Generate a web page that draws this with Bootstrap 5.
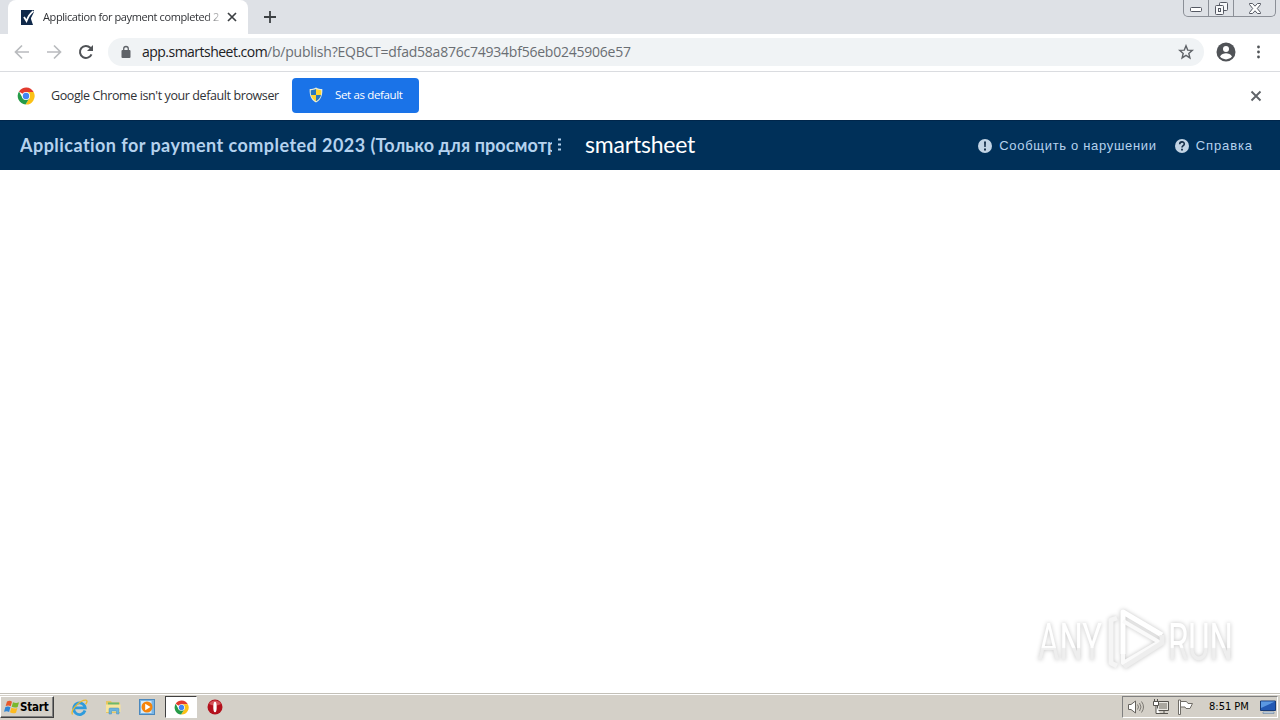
<!DOCTYPE html>
<html lang="ru">
  <head>
    <meta charset="UTF-8" />
    <meta name="viewport" content="width=device-width, initial-scale=1.0" />
    <title>Application for payment completed 2023</title>
    <link
      href="https://cdn.jsdelivr.net/npm/bootstrap@5.3.2/dist/css/bootstrap.min.css"
      rel="stylesheet"
    />
    <style>
      body { font-family: "Open Sans", "Noto Sans", sans-serif; line-height: 1; }
      svg { display: block; flex-shrink: 0; }

      .tab-strip { height: 34px; background: #dee1e6; padding-left: 8px; }
      .browser-tab { width: 240px; height: 34px; background: #fff; border-radius: 8px 8px 0 0; padding: 0 10px 0 13px; }
      .tab-title { width: 176px; margin-left: 9px; font-size: 11px; line-height: 16px; color: #303236; letter-spacing: -.4px;
        -webkit-mask-image: linear-gradient(90deg, #000 162px, transparent 182px); }
      .window-buttons { width: 93px; height: 17px; border: 1px solid #8b8f97; border-top: 0; border-radius: 0 0 5px 5px; margin-right: 4px; }
      .window-buttons > span { width: 25px; height: 16px; border-right: 1px solid #8b8f97; }
      .window-buttons > span:last-child { width: 41px; border: 0; }

      .toolbar { height: 38px; border-bottom: 1px solid #dadce0; padding: 4px 14px 5px; }
      .address-bar { width: 1096px; height: 28px; margin-left: 14px; padding: 0 10px 0 12px; background: #f0f3f5; }
      .address-text { margin-left: 10px; font-size: 14px; line-height: 20px; color: #6a6e73; letter-spacing: -.23px; }
      .address-text b { font-weight: 400; color: #202124; letter-spacing: -.52px; }
      .account-icon { margin-left: 12px; }

      .infobar { height: 48px; padding-left: 17px; padding-right: 18px; }
      .infobar-text { width: 241px; margin-left: 16px; font-size: 12.5px; line-height: 18px; color: #303236; letter-spacing: -.4px; }
      .default-btn { width: 127px; height: 35px; background: #1a73e8; color: #fff; border-radius: 4px; padding: 0 0 1px 17px; font-size: 11.5px; letter-spacing: -.35px; margin-bottom: 1px; }
      .default-btn:hover { background: #1a73e8; color: #fff; }

      .sheet-header { height: 50px; background: #003059; border-top: 1px solid #00264b; padding-left: 20px; padding-right: 27px; color: #b5d2ee; }
      .sheet-title { width: 532px; font: 700 18px/24px Lato, "Open Sans", sans-serif; letter-spacing: .46px; padding-bottom: 1px; }
      .sheet-title span { letter-spacing: .1px; }
      .sheet-logo { margin-left: 23px; margin-bottom: 4px; font: 400 23px/28px Lato, sans-serif; letter-spacing: -.2px; color: #fff; }
      .header-link { font: 13px/18px "Liberation Sans", sans-serif; letter-spacing: .68px; }
      .header-link span { margin-left: 7px; }
      .header-link + .header-link { margin-left: 18px; letter-spacing: .9px; }

      .watermark { right: 40px; bottom: 15px; filter: drop-shadow(0 0 2px #c4c4c4); }
      .watermark text { font: 400 52px Roboto, sans-serif; fill: url(#fade); }

      .taskbar { height: 27px; background: #d4d0c8; border-top: 1px solid #c3c0b8; padding: 2px 2px 2px 0; box-shadow: inset 0 1px #fff; }
      .start-btn { width: 54px; height: 22px; border: 1px solid; border-color: #fff #404040 #404040 #fff; box-shadow: inset -1px -1px #808080; padding-left: 3px; font: 700 11.5px/14px "DejaVu Sans Condensed", "DejaVu Sans", sans-serif; color: #000; letter-spacing: -.2px; }
      .task-icon { width: 34px; height: 22px; }
      .task-active { width: 32px; margin: 0 1px; background: #fff; border: 1px solid; border-color: #404040 #fff #fff #404040; }
      .tray { width: 156px; height: 22px; border: 1px solid; border-color: #808080 #fff #fff #808080; padding-left: 4px; padding-right: 1px; }
      .tray-clock { margin-left: 16px; font: 11px/14px "DejaVu Sans Condensed", "DejaVu Sans", sans-serif; color: #000; }
    </style>
  </head>
  <body class="vh-100 overflow-hidden d-flex flex-column bg-white">
    <!-- tabs -->
    <div class="tab-strip d-flex flex-shrink-0">
      <div class="browser-tab d-flex align-items-center">
        <svg width="13" height="15" viewBox="0 0 13 15"><path d="M0 0h13v2L10 8v1l2 6H0z" fill="#10294a"/><path d="M3 7l2.500 4C7 7 9 3.500 12.500 1" fill="none" stroke="#fff" stroke-width="1.8"/></svg>
        <div class="tab-title text-nowrap overflow-hidden">Application for payment completed 2</div>
        <svg class="ms-auto" width="12" height="12" viewBox="0 0 12 12"><path d="M2 2l8 8M10 2l-8 8" stroke="#3c4043" stroke-width="1.7"/></svg>
      </div>
      <svg class="align-self-center ms-3" width="12" height="12" viewBox="0 0 12 12"><path d="M6 0v12M0 6h12" stroke="#3c4043" stroke-width="1.8"/></svg>
      <div class="window-buttons d-flex ms-auto">
        <span class="d-flex align-items-end justify-content-center pb-1"><svg width="12" height="5" viewBox="0 0 12 5"><rect x=".5" y=".5" width="11" height="4" rx="1" fill="#fff" stroke="#555963"/></svg></span>
        <span class="d-flex align-items-center justify-content-center"><svg width="13" height="13" viewBox="0 0 13 13"><g fill="#f7f8fa" stroke="#555963"><rect x="4.500" y=".5" width="8" height="8" rx="1"/><rect x=".5" y="3.500" width="8" height="9" rx="1"/><rect x="3.500" y="6.500" width="2" height="3"/></g></svg></span>
        <span class="d-flex align-items-center justify-content-center"><svg width="12" height="11" viewBox="0 0 12 11"><path d="M.5.5h3L6 3.200 8.500.5h3v1L8.300 5.500l3.200 4v1h-3L6 7.800 3.500 10.500h-3v-1l3.200-4L.5 1.500z" fill="#fff" stroke="#555963"/></svg></span>
      </div>
    </div>

    <!-- address bar -->
    <div class="toolbar d-flex align-items-center flex-shrink-0">
      <svg width="16" height="16" viewBox="0 0 16 16"><path d="M15 8H2M8 1.500L1.500 8 8 14.500" fill="none" stroke="#b9bbbe" stroke-width="1.7"/></svg>
      <svg class="ms-3" width="16" height="16" viewBox="0 0 16 16"><path d="M1 8h13M8 1.500L14.500 8 8 14.500" fill="none" stroke="#b9bbbe" stroke-width="1.7"/></svg>
      <svg class="ms-3" width="16" height="16" viewBox="0 0 16 16"><path d="M13.500 10.300A6 6 0 1 1 12.300 3.800L14 5.500" fill="none" stroke="#505357" stroke-width="2"/><path d="M15 1v6H9z" fill="#505357"/></svg>
      <div class="address-bar d-flex align-items-center rounded-pill">
        <svg width="12" height="14" viewBox="0 0 12 14"><rect x="1.500" y="5" width="9" height="8" rx="1" fill="#5f6368"/><path d="M3.700 6V3.800a2.300 2.300 0 0 1 4.600 0V6" fill="none" stroke="#5f6368" stroke-width="1.300"/></svg>
        <div class="address-text text-nowrap"><b>app.smartsheet.com</b>/b/publish?EQBCT=dfad58a876c74934bf56eb0245906e57</div>
        <svg class="ms-auto" width="16" height="16" viewBox="0 0 16 16"><path d="M8 1.800l1.700 4.300 4.600.3-3.500 3 1.100 4.500L8 11.400l-3.900 2.500 1.100-4.500-3.500-3 4.600-.3z" fill="none" stroke="#5f6368" stroke-width="1.400"/></svg>
      </div>
      <svg class="account-icon" width="20" height="20" viewBox="0 0 20 20"><circle cx="10" cy="10" r="9.500" fill="#505357"/><circle cx="10" cy="7" r="3" fill="#fff"/><path d="M4 14.400c1-2.200 4-3.200 6-3.200s5 1 6 3.200a7.500 7.500 0 0 1-12 0z" fill="#fff"/></svg>
      <svg class="ms-auto me-1" width="6" height="14" viewBox="0 0 6 14"><g fill="#505357"><circle cx="2.500" cy="2" r="1.400"/><circle cx="2.500" cy="7" r="1.400"/><circle cx="2.500" cy="12" r="1.400"/></g></svg>
    </div>

    <!-- default browser prompt -->
    <div class="infobar d-flex align-items-center flex-shrink-0">
      <svg width="18" height="18" viewBox="0 0 18 18"><path d="M9 9L2 4.500A8.500 8.500 0 0 1 16.600 5H9z" fill="#e23b2e"/><path d="M9 5h7.600A8.500 8.500 0 0 1 8.500 17.500L12.500 11z" fill="#fbc116"/><path d="M2 4.500L5.500 11l7 0-4 6.500A8.500 8.500 0 0 1 2 4.500z" fill="#269b48"/><circle cx="9" cy="9" r="4" fill="#fff"/><circle cx="9" cy="9" r="3.200" fill="#4285f4"/></svg>
      <div class="infobar-text text-nowrap">Google Chrome isn't your default browser</div>
      <button class="btn default-btn border-0 d-flex align-items-center">
        <svg width="14" height="16" viewBox="0 0 14 16"><path d="M7 .5C5 1.500 3 2 .7 2c-.4 6 1.300 11 6.300 13.500C12 13 13.700 8 13.300 2 11 2 9 1.500 7 .5z" fill="#e9edda"/><path d="M7 2v6H2C1.700 6.500 1.700 5 1.800 3.200 4 3.100 5.500 2.700 7 2z" fill="#2878bd"/><path d="M7 2v6h5c.3-1.500.3-3 .2-4.800C10 3.100 8.500 2.700 7 2z" fill="#ffd52e"/><path d="M7 8v6.300C4.300 12.700 2.600 10.700 2 8z" fill="#ffd52e"/><path d="M7 8v6.300c2.700-1.600 4.400-3.600 5-6.300z" fill="#2878bd"/></svg>
        <span class="ms-2 ps-1 text-nowrap">Set as default</span>
      </button>
      <svg class="ms-auto" width="12" height="12" viewBox="0 0 12 12"><path d="M1.500 1.500l9 9M10.500 1.500l-9 9" stroke="#5f6368" stroke-width="1.900"/></svg>
    </div>

    <!-- Smartsheet header -->
    <header class="sheet-header d-flex align-items-center flex-shrink-0">
      <div class="sheet-title text-nowrap overflow-hidden">Application for payment completed 2023 <span>(Только для просмотр</span></div>
      <svg class="ms-1 mb-1" width="6" height="14" viewBox="0 0 6 14"><path d="M2 1.500h3v2H2zM2 6.500h3v2H2zM2 11.500h3v2H2z" fill="#b5d2ee"/></svg>
      <div class="sheet-logo">smartsheet</div>
      <div class="header-link d-flex align-items-center ms-auto text-nowrap">
        <svg width="14" height="14" viewBox="0 0 14 14"><circle cx="7" cy="7" r="7" fill="#c2d4e5"/><path d="M6 2.500h2L7.700 8H6.300zM6 9.500h2v2H6z" fill="#162f49"/></svg>
        <span>Сообщить о нарушении</span>
      </div>
      <div class="header-link d-flex align-items-center text-nowrap">
        <svg width="14" height="14" viewBox="0 0 14 14"><circle cx="7" cy="7" r="7" fill="#c2d4e5"/><path d="M4.700 5.200c0-3 4.600-3 4.600-.3C9.300 6.600 7 6.600 7 8.500" fill="none" stroke="#162f49" stroke-width="1.600"/><path d="M6.100 9.700h1.800v1.800H6.100z" fill="#162f49"/></svg>
        <span>Справка</span>
      </div>
    </header>

    <main class="flex-fill position-relative">
      <svg class="watermark position-absolute" width="210" height="74" viewBox="0 0 210 74">
        <defs><linearGradient id="fade" x2="0" y2="1"><stop offset=".58" stop-color="#fff"/><stop offset=".6" stop-color="#eee"/></linearGradient></defs>
        <text x="8" y="56" textLength="64" lengthAdjust="spacingAndGlyphs">ANY</text>
        <text x="138" y="56" textLength="65" lengthAdjust="spacingAndGlyphs">RUN</text>
        <g fill="none" stroke-width="5" stroke-linejoin="round">
          <path d="M87 14l-6 2v43l6 3" stroke="#f5f5f5"/>
          <path d="M93 50V8l39 23" stroke="#fff"/>
          <path d="M93 17l36 21-36 21V50" stroke="#fafafa" stroke-width="4"/>
          <path d="M132 31v8L94 63" stroke="#eee"/>
        </g>
      </svg>
    </main>

    <!-- taskbar -->
    <footer class="taskbar d-flex align-items-center flex-shrink-0">
      <div class="start-btn d-flex align-items-center me-2">
        <svg width="16" height="16" viewBox="0 0 16 16"><path d="M3 2.500Q6 1 8 2.700L6.700 7.300Q4.500 5.800 1.700 7z" fill="#e8592b"/><path d="M9 3.200q3 1.500 6 .1L13.700 8q-3 1.200-6-.3z" fill="#79b82d"/><path d="M1.400 8q3-1.200 5 .3L5.100 13Q3 11.500 0 12.700z" fill="#2f86d6"/><path d="M7.400 8.800q3 1.400 6 .2L12 13.700q-3 1.200-6-.4z" fill="#fdbb20"/></svg>
        <span>Start</span>
      </div>
      <div class="task-icon d-flex align-items-center justify-content-center">
        <svg width="17" height="17" viewBox="0 0 17 17"><path d="M14 11.500A5.800 5.800 0 1 1 14.200 8.800H4" fill="none" stroke="#2f9bdc" stroke-width="2.800"/><path d="M1.500 15.500C-1 11 9 1 15 1.200c2 .6.500 3-.4 4" fill="none" stroke="#e9b92e" stroke-width="1.300"/></svg>
      </div>
      <div class="task-icon d-flex align-items-center justify-content-center">
        <svg width="17" height="16" viewBox="0 0 17 16"><path d="M1 2h5l1 1.500h8V14H1z" fill="#e8c661"/><path d="M3 3.500h11v3H3z" fill="#6db86a"/><path d="M1 5.500h14.500V13H1z" fill="#f8e59c"/><path d="M4 15v-5q0-1 1-1h8q1 0 1 1v5h-2.500v-3h-5v3z" fill="#6bb3dc" stroke="#4b91bd" stroke-width=".5"/></svg>
      </div>
      <div class="task-icon d-flex align-items-center justify-content-center">
        <svg width="16" height="16" viewBox="0 0 16 16"><rect x=".5" y=".5" width="15" height="15" fill="#79b5e5" stroke="#4b88bd"/><rect x="2" y="2" width="10.500" height="12" fill="#d5eafa"/><circle cx="8" cy="8" r="5.500" fill="#f5840b"/><path d="M6.200 4.800L11.500 8l-5.300 3.200z" fill="#fff"/></svg>
      </div>
      <div class="task-icon task-active d-flex align-items-center justify-content-center">
        <svg width="15" height="15" viewBox="0 0 18 18"><path d="M9 9L2 4.500A8.500 8.500 0 0 1 16.600 5H9z" fill="#e23b2e"/><path d="M9 5h7.600A8.500 8.500 0 0 1 8.500 17.500L12.500 11z" fill="#fbc116"/><path d="M2 4.500L5.500 11l7 0-4 6.500A8.500 8.500 0 0 1 2 4.500z" fill="#269b48"/><circle cx="9" cy="9" r="4" fill="#fff"/><circle cx="9" cy="9" r="3.200" fill="#4285f4"/></svg>
      </div>
      <div class="task-icon d-flex align-items-center justify-content-center">
        <svg width="16" height="16" viewBox="0 0 16 16"><circle cx="8" cy="8" r="7.500" fill="#b3101c"/><path d="M2 5a7 7 0 0 1 12 0q-6 3-12 0z" fill="#d5535a"/><ellipse cx="8" cy="8" rx="1.700" ry="5.300" fill="#fff"/></svg>
      </div>

      <div class="tray d-flex align-items-center ms-auto">
        <svg width="18" height="16" viewBox="0 0 18 16"><path d="M1.500 5.500H4L8.500 2v12L4 10.500H1.500z" fill="#fff" stroke="#65625d"/><path d="M10.500 5.500q2 2.500 0 5M12.500 4q3 4 0 8M14.500 2.500q4 5.500 0 11" fill="none" stroke="#7b7872"/></svg>
        <svg class="ms-2" width="16" height="16" viewBox="0 0 16 16"><path d="M4.500 2.500h11v9h-11z" fill="#e9e7e1" stroke="#55524d"/><path d="M6 4h8v6H6z" fill="#aaa79f"/><path d="M.5 2.500h5v4h-5zM1.500 0v2M4.500 0v2M3 6.500v8h4M7 14.500h8M11 12v2" fill="#fff" stroke="#55524d"/></svg>
        <svg class="ms-2" width="16" height="16" viewBox="0 0 16 16"><path d="M1.500 1v14.500h2V1z" fill="#fff" stroke="#706d67"/><path d="M3.500 2.500h6l1.500 2h4.500l-2.500 5H9l-1-1.500H3.500z" fill="#fff" stroke="#706d67"/></svg>
        <span class="tray-clock text-nowrap">8:51 PM</span>
        <svg class="ms-auto" width="16" height="14" viewBox="0 0 16 14"><path d="M.5 1h15v9.500H.5z" fill="#2359b4" stroke="#173b77"/><path d="M1 1.500h14L1 8z" fill="#5b98e2"/><path d="M3 12h11v1.500H3z" fill="#d7e5f2" stroke="#46698c" stroke-width=".5"/></svg>
      </div>
    </footer>
    <script src="https://cdn.jsdelivr.net/npm/bootstrap@5.3.2/dist/js/bootstrap.bundle.min.js"></script>
  </body>
</html>
